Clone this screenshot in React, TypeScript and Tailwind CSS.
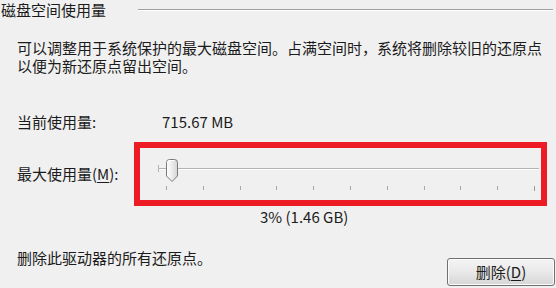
export default function App() {
  const ticks = Array.from({ length: 11 }, (_, i) => i);

  return (
    <div className="h-[288px] w-[556px] overflow-hidden bg-[#f0f0f0] font-['Noto_Sans_CJK_SC','Microsoft_YaHei',sans-serif] text-[15px] text-[#1b1b1b]">
      {/* group header */}
      <div className="flex h-[20px] items-center pl-[1px] pr-[3px]">
        <span className="whitespace-nowrap leading-[20px]">磁盘空间使用量</span>
        <div className="ml-[32px] h-[2px] flex-1 border-t border-b border-t-[#a0a0a0] border-b-white" />
      </div>

      <p className="mt-[19px] whitespace-nowrap pl-[17px] leading-[18px]">
        可以调整用于系统保护的最大磁盘空间。占满空间时，系统将删除较旧的还原点
        <br />
        以便为新还原点留出空间。
      </p>

      <div className="mt-[38px] flex h-[18px] items-center pl-[17px] leading-[18px]">
        <span className="w-[145px]">当前使用量:</span>
        <span>715.67 MB</span>
      </div>

      {/* slider row */}
      <div className="mt-[11px] flex items-center pl-[17px]">
        <span className="w-[117px] whitespace-nowrap leading-[18px]">
          最大使用量(<span className="underline underline-offset-2">M</span>):
        </span>
        <div className="h-[64px] w-[413px] border-[6px] border-[#ed1c24]">
          <div className="relative ml-[18px] mr-[2px] mt-[20px] flex h-[2px] flex-col">
            <div className="h-px bg-[#b4b4b4]" />
            <div className="h-px bg-white" />
            <div className="absolute left-0 top-[-3px] h-[7px] w-px bg-[#b4b4b4]" />
            <svg
              className="absolute left-[7px] top-[-9px]"
              width="14"
              height="24"
              viewBox="0 0 14 24"
            >
              <defs>
                <linearGradient id="thumb" x1="0" y1="0" x2="1" y2="0">
                  <stop offset="0" stopColor="#ffffff" />
                  <stop offset="0.5" stopColor="#ececec" />
                  <stop offset="1" stopColor="#d4d4d4" />
                </linearGradient>
              </defs>
              <path
                d="M1.5 3.5 Q1.5 0.5 4.5 0.5 H9.5 Q12.5 0.5 12.5 3.5 V17 L7 22.5 L1.5 17 Z"
                fill="url(#thumb)"
                stroke="#7a7a7a"
                strokeWidth="1"
              />
              <path d="M2.5 3.5 Q2.5 1.5 4.5 1.5 H9.5" fill="none" stroke="#ffffff" strokeWidth="1" />
            </svg>
          </div>
          <div className="ml-[26px] mt-[16px] flex w-[369px] items-start justify-between">
            {ticks.map((i) => (
              <div
                key={i}
                className={i === 10 ? "h-[5px] w-px bg-[#9a9a9a]" : "h-[4px] w-px bg-[#a8a8a8]"}
              />
            ))}
          </div>
        </div>
      </div>

      <div className="mt-[2px] h-[17px] whitespace-nowrap pl-[260px] leading-[17px]">3% (1.46 GB)</div>

      <div className="flex items-start pl-[17px] pr-[1px]">
        <span className="mt-[24px] whitespace-nowrap leading-[17px]">删除此驱动器的所有还原点。</span>
        <button className="ml-auto mt-[33px] flex h-[28px] w-[108px] items-center justify-center rounded-[3px] border border-[#707070] bg-gradient-to-b from-[#f4f4f4] via-[#e9e9e9] to-[#d6d6d6] leading-[18px] shadow-[inset_0_0_0_1px_#fbfbfb]">
          删除(<span className="underline underline-offset-2">D</span>)
        </button>
      </div>
    </div>
  );
}
